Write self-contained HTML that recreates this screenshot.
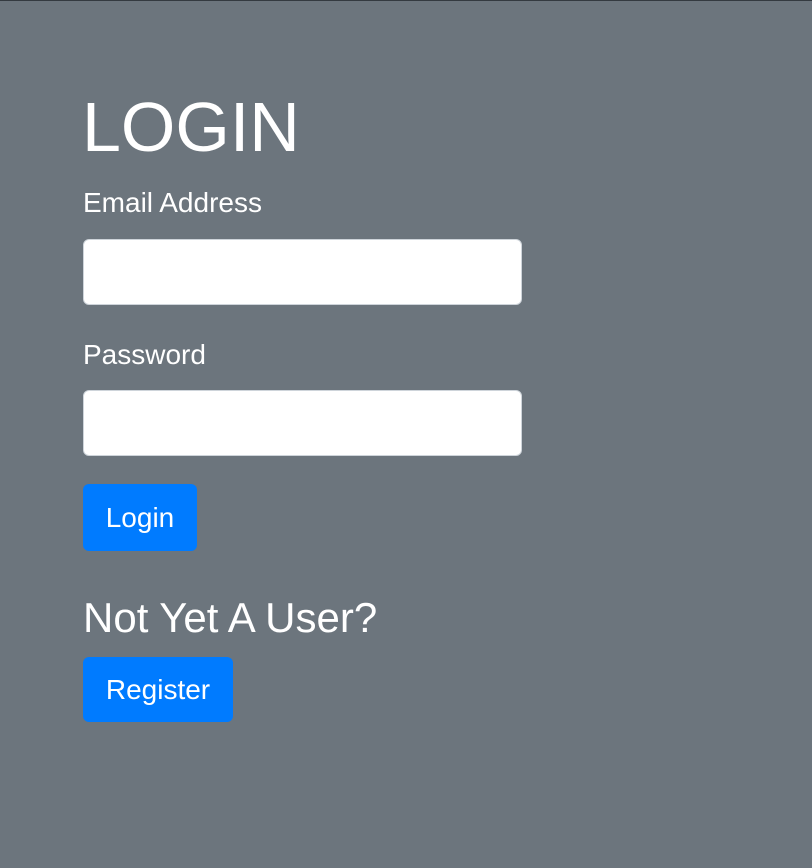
<!DOCTYPE html>
<html><head><style>
html,body{margin:0;padding:0}
body{width:812px;height:868px;background:#6c757d;border-top:1px solid #343a40;box-sizing:border-box;position:relative;overflow:hidden;font-family:"Liberation Sans",sans-serif;color:#fff}
.a{position:absolute;white-space:nowrap}
.in{position:absolute;left:83px;width:437px;height:64px;background:#fff;border:1px solid #ced4da;border-radius:6px}
.btn{position:absolute;left:83px;background:#007bff;border-radius:6px;color:#fff;font-size:28px;display:flex;align-items:center;justify-content:center}
</style></head><body>
<div class="a" style="left:82px;top:86px;font-size:70px;line-height:80px">LOGIN</div>
<div class="a" style="left:83px;top:186px;font-size:28px;line-height:32px">Email Address</div>
<div class="in" style="top:238px"></div>
<div class="a" style="left:83px;top:338px;font-size:28px;line-height:32px">Password</div>
<div class="in" style="top:389px"></div>
<div class="btn" style="top:483px;width:114px;height:67px">Login</div>
<div class="a" style="left:83px;top:593px;font-size:42px;line-height:48px">Not Yet A User?</div>
<div class="btn" style="top:656px;width:150px;height:65px">Register</div>
</body></html>
